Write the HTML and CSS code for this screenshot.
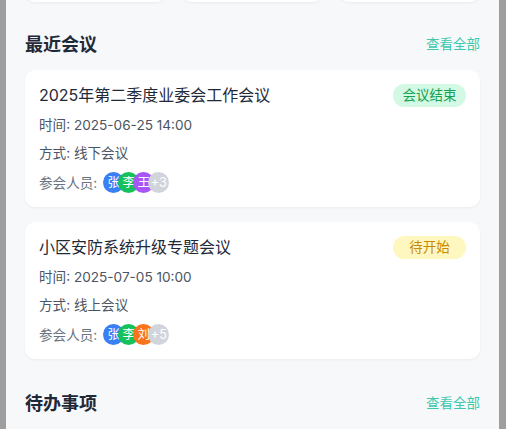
FILE: index.html
```html
<!DOCTYPE html>
<html lang="zh-CN">
<head>
  <meta charset="UTF-8" />
  <meta name="viewport" content="width=device-width, initial-scale=1.0"/>
  <title>业委会</title>
  <link rel="stylesheet" href="styles.css">
</head>
<body>
  <div class="screen">
    <div class="stats">
      <div class="stat-card"></div>
      <div class="stat-card"></div>
      <div class="stat-card"></div>
    </div>

    <div class="section-head">
      <h2>最近会议</h2>
      <a class="more" href="#">查看全部</a>
    </div>

    <div class="meeting">
      <div class="meeting-top">
        <div class="meeting-title">2025年第二季度业委会工作会议</div>
        <span class="badge done">会议结束</span>
      </div>
      <div class="meta first">时间: 2025-06-25 14:00</div>
      <div class="meta">方式: 线下会议</div>
      <div class="people">
        <span class="people-label">参会人员:</span>
        <div class="avatars">
          <span class="avatar blue">张</span>
          <span class="avatar green">李</span>
          <span class="avatar purple">王</span>
          <span class="avatar gray">+3</span>
        </div>
      </div>
    </div>

    <div class="meeting">
      <div class="meeting-top">
        <div class="meeting-title">小区安防系统升级专题会议</div>
        <span class="badge pending">待开始</span>
      </div>
      <div class="meta first">时间: 2025-07-05 10:00</div>
      <div class="meta">方式: 线上会议</div>
      <div class="people">
        <span class="people-label">参会人员:</span>
        <div class="avatars">
          <span class="avatar blue">张</span>
          <span class="avatar green">李</span>
          <span class="avatar orange">刘</span>
          <span class="avatar gray">+5</span>
        </div>
      </div>
    </div>

    <div class="section-head todo">
      <h2>待办事项</h2>
      <a class="more" href="#">查看全部</a>
    </div>
  </div>
</body>
</html>
```

FILE: styles.css
```css
body {
  margin: 0;
  padding: 0 7px 0 6px;
  background-color: #9e9e9e;
  font-family: Inter, 'Noto Sans CJK SC', sans-serif;
  color: #1f2937;
  height: 429px;
  overflow: hidden;
}

.screen {
  background: #f7f8fa;
  height: 100%;
  padding: 0 19px;
  overflow: hidden;
}

.stats {
  display: grid;
  grid-template-columns: repeat(3, 1fr);
  gap: 16px;
  margin-top: -78px;
}

.stat-card {
  height: 80px;
  background: #fff;
  border-radius: 10px;
  box-shadow: 0 1px 3px rgba(0, 0, 0, 0.06);
}

.section-head {
  display: flex;
  justify-content: space-between;
  align-items: center;
  height: 24px;
  margin: 29px 0 15px;
}

.section-head.todo {
  margin-top: 31px;
}

h2 {
  margin: 0;
  font-size: 18px;
  font-weight: bold;
  color: #1f2937;
}

.more {
  font-size: 13.5px;
  color: #3cc9ad;
  text-decoration: none;
}

.meeting {
  background: #fff;
  border-radius: 10px;
  padding: 14px;
  margin-bottom: 15px;
  box-shadow: 0 1px 3px rgba(0, 0, 0, 0.05);
}

.meeting-top {
  display: flex;
  justify-content: space-between;
  align-items: center;
  height: 22px;
}

.meeting-title {
  font-size: 16px;
  line-height: 22px;
  color: #1f2937;
}

.badge {
  width: 73px;
  text-align: center;
  font-size: 13.5px;
  line-height: 23px;
  border-radius: 12px;
}

.badge.done {
  background: #d3f9e4;
  color: #14a150;
}

.badge.pending {
  background: #fef7c0;
  color: #ca8a04;
}

.meta {
  font-size: 13.6px;
  line-height: 20px;
  color: #4b5563;
  margin-top: 8px;
}

.meta.first {
  margin-top: 9px;
}

.people {
  display: flex;
  align-items: center;
  margin-top: 8px;
  height: 22px;
}

.people-label {
  font-size: 13.6px;
  color: #6b7280;
  margin-right: 6px;
}

.avatars {
  display: flex;
}

.avatar {
  width: 21px;
  height: 21px;
  border-radius: 50%;
  color: #fff;
  font-size: 12.5px;
  line-height: 21px;
  text-align: center;
  margin-left: -6px;
}

.avatar:first-child {
  margin-left: 0;
}

.blue { background: #3b7ff5; }
.green { background: #16c05a; }
.purple { background: #a855f7; }
.orange { background: #f9731a; }
.gray { background: #d1d5db; }
```
